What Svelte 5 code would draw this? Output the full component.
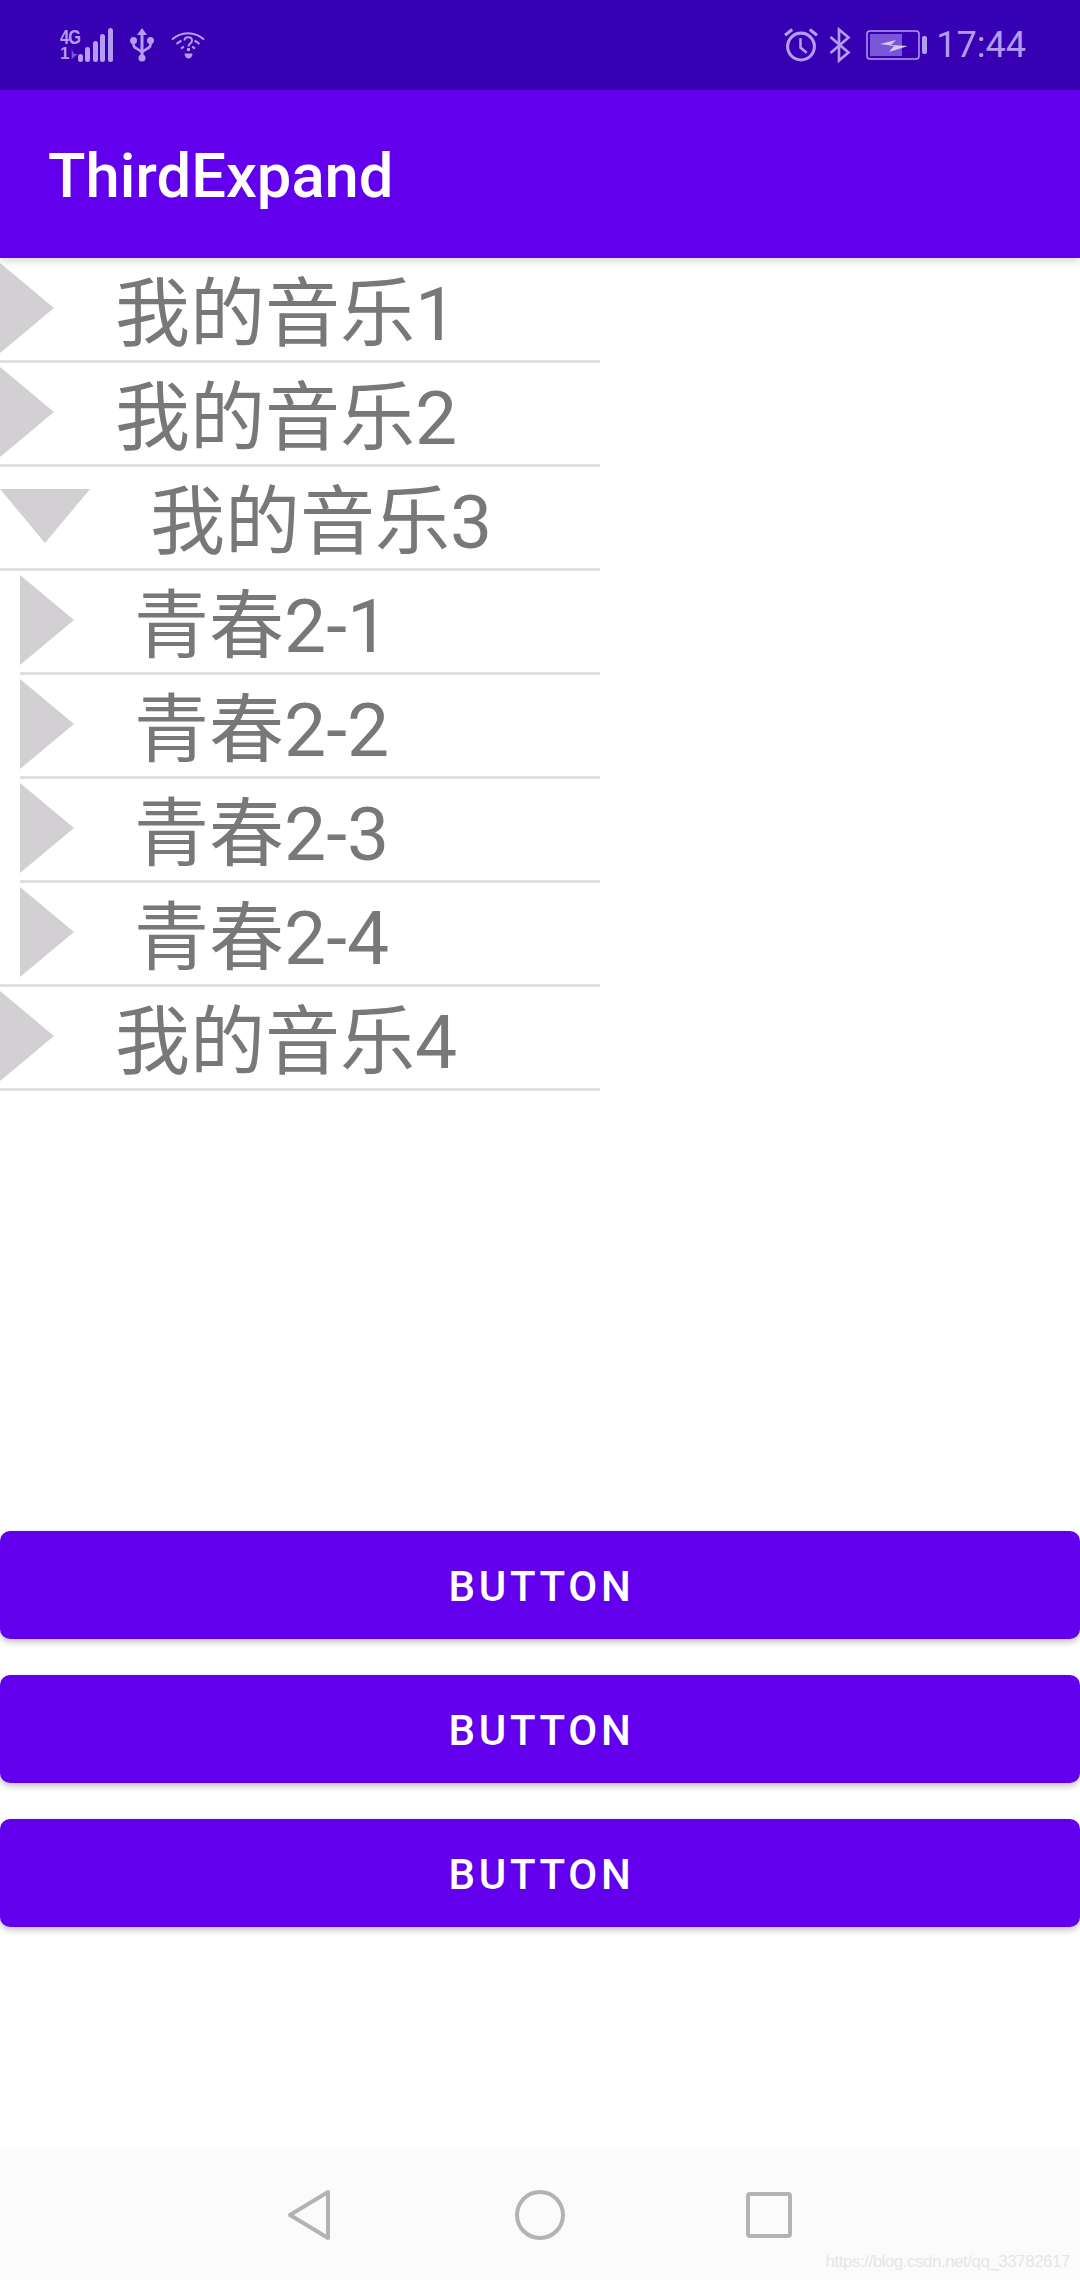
<script lang="ts">
  const rows = [
    { label: '我的音乐1', kind: 'group' },
    { label: '我的音乐2', kind: 'group' },
    { label: '我的音乐3', kind: 'open' },
    { label: '青春2-1', kind: 'child' },
    { label: '青春2-2', kind: 'child' },
    { label: '青春2-3', kind: 'child' },
    { label: '青春2-4', kind: 'child last' },
    { label: '我的音乐4', kind: 'group' }
  ];
</script>

<div class="screen">
  <div class="status-bar">
    <div class="status-left">
      <div class="network">
        <span class="net-top">4G</span>
        <span class="net-bottom">1<svg class="net-arrows" width="9" height="14" viewBox="0 0 9 14"><path d="M1 0v14l8-7H4z" fill="#7a5ad8" /></svg></span>
      </div>
      <svg class="signal" width="35" height="34" viewBox="0 0 35 34">
        <rect x="0" y="26" width="5" height="8" rx="2.5" />
        <rect x="7" y="19" width="5" height="15" rx="2.5" />
        <rect x="15" y="13" width="5" height="21" rx="2.5" />
        <rect x="22" y="6" width="5" height="28" rx="2.5" />
        <rect x="30" y="0" width="5" height="34" rx="2.5" />
      </svg>
      <svg class="usb" width="24" height="34" viewBox="0 0 24 34">
        <path d="M12 0l5 7h-3.500v20h-3V7H7z" />
        <circle cx="12" cy="30" r="3.500" />
        <circle cx="3.500" cy="12.500" r="3.500" />
        <circle cx="20.500" cy="12.500" r="3.500" />
        <path d="M3.500 13v3.500c0 2 1 3 3 4l5.500 3.500M20.500 13v3.500c0 2-1 3-3 4L12 24" fill="none" stroke="#b49cf0" stroke-width="2.600" />
      </svg>
      <svg class="wifi" width="34" height="28" viewBox="0 0 34 28">
        <g fill="none" stroke="#b49cf0" stroke-width="2">
          <path d="M1 8.500C10 0 24 0 33 8.500" />
          <path d="M5.500 13c2-1.700 3.500-2.700 5-3.300M23.500 9.700c1.500.6 3 1.600 5 3.300" />
          <path d="M10 17.500c1-.8 2-1.400 3-1.800M21 15.700c1 .4 2 1 3 1.800" />
          <path d="M13.500 9.500c0-4.500 7.500-4.500 7.500 0 0 3-3.500 3-3.500 6" />
        </g>
        <rect x="16" y="17" width="3" height="3" fill="#b49cf0" />
        <path d="M13.500 22.500h8c0 3-2 5-4 5s-4-2-4-5z" fill="#b49cf0" />
      </svg>
    </div>

    <div class="status-right">
      <svg class="alarm" width="34" height="34" viewBox="0 0 33 33">
        <circle cx="16.500" cy="18" r="13" fill="none" stroke="#b49cf0" stroke-width="3" />
        <path d="M16 10v9l6 5" fill="none" stroke="#b49cf0" stroke-width="2.500" />
        <path d="M1 7l7-5.500M32 7l-7-5.500" fill="none" stroke="#b49cf0" stroke-width="3" />
      </svg>
      <svg class="bluetooth" width="22" height="36" viewBox="0 0 22 34">
        <path d="M1.500 9l18 15.500L10 32.500V1.500l9.500 8L1.500 25" fill="none" stroke="#b49cf0" stroke-width="2.600" />
      </svg>
      <svg class="battery" width="61" height="30" viewBox="0 0 61 30">
        <rect x="1" y="1" width="52" height="28" rx="3" fill="none" stroke="#b49cf0" stroke-width="1.500" />
        <rect x="4" y="4" width="32" height="22" fill="#7a55d8" />
        <path d="M14 14l16-4-5 5 17 1-19 6 5-6z" fill="#d6c8f7" />
        <rect x="56" y="6" width="5" height="18" rx="2" fill="#b49cf0" />
      </svg>
      <span class="clock">17:44</span>
    </div>
  </div>

  <div class="app-bar"><span>ThirdExpand</span></div>

  <div class="list">
    {#each rows as row}
      <div class="row {row.kind}">
        {#if row.kind === 'open'}
          <svg class="arrow" width="90" height="54" viewBox="0 0 90 54"><path d="M0 0h90L45 54z" /></svg>
        {:else}
          <svg class="arrow" width="54" height="90" viewBox="0 0 54 90"><path d="M0 0l54 45L0 90z" /></svg>
        {/if}
        <span class="label">{row.label}</span>
      </div>
    {/each}
  </div>

  <div class="buttons">
    <button class="btn">Button</button>
    <button class="btn">Button</button>
    <button class="btn">Button</button>
  </div>

  <div class="nav-bar">
    <svg width="44" height="52" viewBox="0 0 44 52">
      <path d="M41 3L3 26l0 0L41 49z" fill="none" stroke="#b3b3b3" stroke-width="4" stroke-linejoin="round" />
    </svg>
    <svg width="50" height="50" viewBox="0 0 50 50">
      <circle cx="25" cy="25" r="23" fill="none" stroke="#b3b3b3" stroke-width="4" />
    </svg>
    <svg width="46" height="46" viewBox="0 0 46 46">
      <rect x="2" y="2" width="42" height="42" rx="2" fill="none" stroke="#b3b3b3" stroke-width="4" />
    </svg>
    <span class="watermark">https://blog.csdn.net/qq_33782617</span>
  </div>
</div>

<style>
  :global(body) {
    margin: 0;
    background: #fff;
  }

  .screen {
    width: 1080px;
    height: 2280px;
    display: flex;
    flex-direction: column;
    overflow: hidden;
    font-family: Roboto, "Noto Sans CJK SC", sans-serif;
  }

  .status-bar {
    height: 90px;
    flex-shrink: 0;
    display: flex;
    align-items: center;
    justify-content: space-between;
    padding: 0 54px 0 60px;
    background: #3700b3;
    color: #b49cf0;
    fill: #b49cf0;
  }

  .status-left,
  .status-right {
    display: flex;
    align-items: center;
  }

  .network {
    width: 18px;
    display: flex;
    flex-direction: column;
    font-family: "Liberation Sans", sans-serif;
    font-weight: 700;
    font-size: 17px;
    line-height: 17px;
    white-space: nowrap;
  }

  .net-top {
    font-size: 21px;
    letter-spacing: -1px;
    transform: scaleX(0.78);
    transform-origin: left center;
  }

  .net-bottom {
    display: flex;
    align-items: center;
    gap: 2px;
  }

  .usb { margin-left: 17px; }
  .wifi { margin-left: 17px; }
  .bluetooth { margin-left: 11px; }
  .battery { margin-left: 15px; }

  .clock {
    margin-left: 9px;
    font-size: 36px;
    line-height: 42px;
  }

  .app-bar {
    height: 168px;
    flex-shrink: 0;
    display: flex;
    align-items: center;
    padding-left: 48px;
    background: #6200ee;
    color: #fff;
    font-size: 61.500px;
    font-weight: 500;
    box-shadow: 0 3px 8px rgba(0, 0, 0, 0.16);
    z-index: 1;
  }

  .app-bar span {
    margin-top: 4px;
  }

  .list {
    width: 600px;
    display: flex;
    flex-direction: column;
    padding-top: 1px;
  }

  .row {
    height: 104px;
    box-sizing: border-box;
    display: flex;
    align-items: center;
    border-bottom: 3px solid #e0e0e0;
    color: #787878;
    font-size: 75px;
  }

  .row.child {
    margin-left: 20px;
  }

  .row.child.last {
    margin-left: 0;
    padding-left: 20px;
  }

  .arrow {
    flex-shrink: 0;
    align-self: flex-start;
    margin-top: 4px;
    fill: #d2d0d2;
  }

  .label {
    margin-top: -4px;
  }

  .row.group .label { margin-left: 61px; }
  .row.child .label { margin-left: 60px; }

  .row.open .arrow {
    margin-top: 22px;
  }
  .row.open .label { margin-left: 60px; }

  .buttons {
    display: flex;
    flex-direction: column;
    gap: 36px;
    margin-top: 440px;
  }

  .btn {
    height: 108px;
    padding: 2px 0 0 3px;
    border: none;
    border-radius: 10px;
    background: #6200ee;
    color: #fff;
    font: 500 42px Roboto, sans-serif;
    letter-spacing: 3.750px;
    text-transform: uppercase;
    box-shadow: 0 3px 6px rgba(0, 0, 0, 0.25);
  }

  .nav-bar {
    position: relative;
    margin-top: auto;
    height: 131px;
    display: flex;
    align-items: center;
    padding-left: 287px;
    background: #fbfbfb;
  }

  .nav-bar svg:nth-child(2) { margin-left: 184px; }
  .nav-bar svg:nth-child(3) { margin-left: 181px; }

  .watermark {
    position: absolute;
    right: 10px;
    bottom: 8px;
    font-family: "Liberation Sans", sans-serif;
    font-size: 17px;
    letter-spacing: -0.500px;
    color: #e6e6e6;
  }
</style>
